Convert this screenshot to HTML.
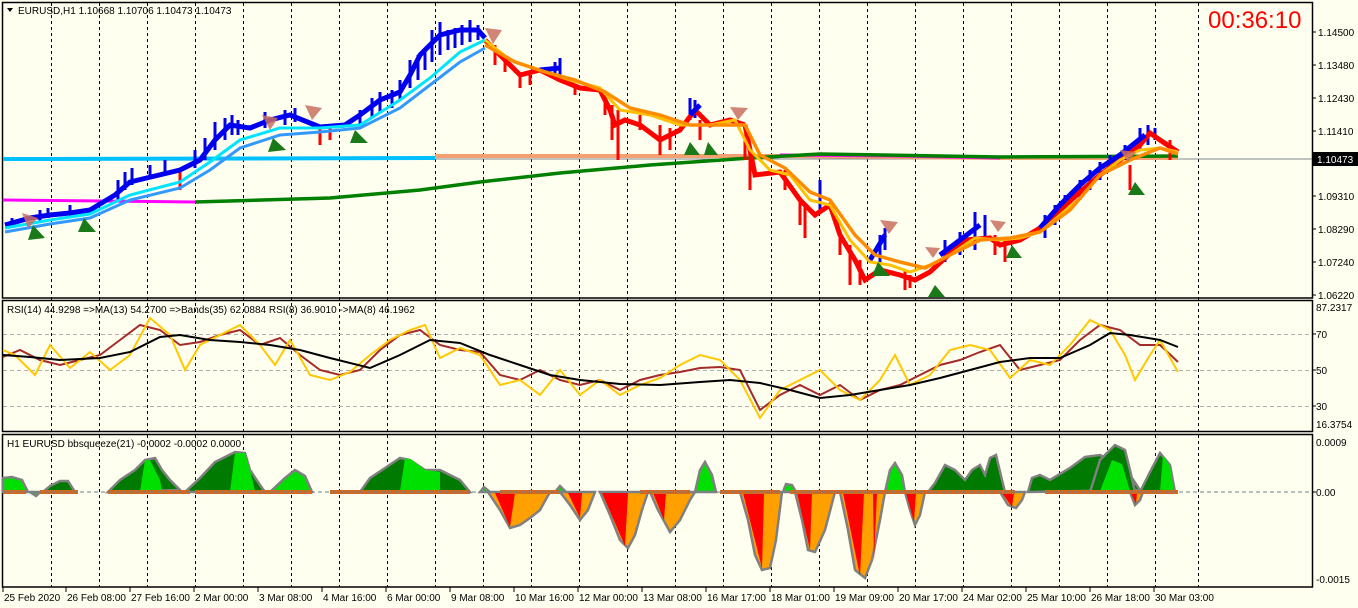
<!DOCTYPE html>
<html><head><meta charset="utf-8"><style>
html,body{margin:0;padding:0;background:#fffff0;width:1358px;height:608px;overflow:hidden}
svg{display:block}
text{font-family:"Liberation Sans","DejaVu Sans",sans-serif;font-size:10px;fill:#000}
</style></head><body>
<svg width="1358" height="608" viewBox="0 0 1358 608" xmlns="http://www.w3.org/2000/svg">
<rect width="1358" height="608" fill="#fffff0"/>
<g stroke="#000" stroke-width="1" stroke-dasharray="3,3">
<path d="M51.5 3V587M99.5 3V587M147.5 3V587M195.5 3V587M243.5 3V587M291.5 3V587M339.5 3V587M387.5 3V587M435.5 3V587M483.5 3V587M531.5 3V587M579.5 3V587M627.5 3V587M675.5 3V587M723.5 3V587M771.5 3V587M819.5 3V587M867.5 3V587M915.5 3V587M963.5 3V587M1011.5 3V587M1059.5 3V587M1107.5 3V587M1155.5 3V587M1198.5 3V587"/>
</g>
<g stroke="#b0b0b0" stroke-dasharray="4,3"><path d="M3 334.5H1312M3 370.5H1312M3 406.5H1312"/></g>
<g fill="none" stroke="#000" stroke-width="1.5">
<rect x="2.5" y="2.5" width="1310" height="295.5"/>
<rect x="2.5" y="300.5" width="1310" height="131"/>
<rect x="2.5" y="434.5" width="1310" height="152.5"/>
</g>
<path d="M3 159H1312" stroke="#808890" stroke-width="1"/>
<path d="M3 159L40 159L435 158" stroke="#00bfff" stroke-width="4" fill="none"/>
<path d="M435 156L740 156L790 156L1000 158L1178 158" stroke="#f4a070" stroke-width="4" fill="none"/>
<path d="M3 200L195 202" stroke="#ff00ff" stroke-width="3" fill="none"/>
<path d="M780 155L900 156L1000 158" stroke="#ff00ff" stroke-width="3" fill="none"/>
<path d="M195 202L330 198L420 190L480 182L560 173L650 165L750 158L820 154L1000 157L1178 156" stroke="#008000" stroke-width="3.5" fill="none"/>
<!-- spiky bars -->
<g stroke="#0000ee" stroke-width="3">
<path d="M12 228V218M40 222V210M48 218V208M70 213V205M118 200V180M125 190V172M132 185V168M150 178V165M165 175V160M195 168V150M205 160V138M215 150V122M225 140V118M232 135V115M238 135V120M265 128V112M285 125V110M295 122V108M360 125V110M372 118V98M380 112V92M392 108V90M400 100V80M410 88V60M418 80V55M425 70V48M432 62V30M440 55V22M448 50V30M455 48V28M462 45V25M470 42V20M478 40V25M555 75V62M560 78V58M690 120V98M695 118V100M820 210V180M880 265V235M885 250V228M945 262V240M960 255V232M975 250V212M985 240V215M1045 238V215M1055 225V205M1065 215V195M1080 200V180M1090 190V170M1100 180V162M1110 170V155M1125 160V145M1140 150V128M1148 145V125M1155 140V128"/>
</g>
<g stroke="#ff0000" stroke-width="3">
<path d="M180 170V190M320 125V145M330 128V140M495 45V65M505 55V72M520 75V88M530 72V85M575 85V95M605 95V115M612 105V140M618 110V160M640 115V130M660 125V155M670 128V150M700 120V140M745 135V160M750 155V190M785 170V190M800 200V225M805 205V238M840 235V255M850 245V285M860 260V285M905 270V290M910 275V288M995 235V255M1005 240V262M1130 165V190M1170 140V160"/>
</g>
<path d="M5 225L30 218L50 215L70 213L90 210L115 195L130 182L155 176L180 170L200 160L215 140L230 125L250 128L270 120L290 115L320 127L345 125L360 115L380 100L400 92L410 75L420 55L440 35L460 30L478 30L485 38" stroke="#0000ee" stroke-width="5" fill="none"/>
<path d="M485 40L500 55L520 75L540 70L560 80L580 88L600 90L610 110L615 125L625 120L640 125L660 140L680 130L695 110L710 125L730 120L745 125" stroke="#ff0000" stroke-width="5" fill="none"/>
<path d="M745 125L755 175L780 172L800 200L815 215L830 205L840 235L855 260L865 280L880 270L900 275L915 280L930 272L945 258L965 240L990 238L1000 245L1020 240L1040 228L1060 210L1080 192L1100 175L1120 160L1140 145L1150 133L1160 140L1178 152" stroke="#ff0000" stroke-width="5" fill="none"/>
<path d="M540 70L560 68M690 115L700 105M870 260L885 235M940 255L980 225M1040 228L1060 205L1080 185L1100 168L1120 155L1145 135" stroke="#0000ee" stroke-width="5" fill="none"/>
<path d="M5 228L50 220L90 214L130 195L180 182L210 162L240 140L280 128L320 128L360 125L400 100L430 78L460 52L485 40" stroke="#00e5ff" stroke-width="3" fill="none"/>
<path d="M5 232L50 224L90 218L130 200L180 188L210 170L240 148L280 135L320 132L360 128L400 108L430 85L460 62L485 48" stroke="#3399ff" stroke-width="3" fill="none"/>
<path d="M485 40L510 60L540 70L570 80L600 88L620 110L650 115L680 125L710 125L735 120L750 150L770 170L790 175L810 200L830 205L850 240L870 262L890 265L910 272L930 265L950 255L975 238L1000 240L1020 238L1040 232L1060 215L1080 198L1100 175L1120 160L1140 150L1160 148L1178 152" stroke="#ffc000" stroke-width="3" fill="none"/>
<path d="M485 45L515 62L545 72L575 80L605 92L630 108L660 115L690 125L720 125L745 125L760 155L785 168L810 192L830 200L855 235L875 255L900 262L925 268L950 255L980 240L1010 238L1040 232L1070 210L1100 175L1130 160L1160 148L1178 154" stroke="#ff8c00" stroke-width="3.5" fill="none"/>
<g fill="#c87060" opacity="0.85">
<path d="M22 213L38 218L28 228Z"/><path d="M262 115L278 118L270 130Z"/><path d="M305 105L322 108L312 120Z"/><path d="M485 28L502 30L493 44Z"/><path d="M730 107L748 108L738 120Z"/><path d="M880 220L898 222L889 234Z"/><path d="M925 247L940 248L933 258Z"/><path d="M990 220L1006 222L998 232Z"/><path d="M1120 150L1136 152L1128 162Z"/>
</g>
<g fill="#1a7a1a">
<path d="M33 225L28 240L45 238Z"/><path d="M84 218L78 232L96 232Z"/><path d="M273 138L268 152L286 150Z"/><path d="M355 130L350 143L368 143Z"/><path d="M690 142L684 155L700 155Z"/><path d="M708 142L704 155L718 155Z"/><path d="M878 262L872 276L890 276Z"/><path d="M935 285L928 297L945 297Z"/><path d="M1012 245L1006 258L1022 258Z"/><path d="M1135 182L1128 195L1145 195Z"/>
</g>
<path d="M3 357L20 350L40 360L60 365L80 360L100 355L120 340L140 325L160 330L180 345L200 342L220 335L240 330L260 345L280 338L300 355L320 370L340 375L360 370L380 350L400 335L420 330L440 345L460 350L480 352L500 375L520 380L540 370L560 380L580 385L600 380L620 390L640 380L660 375L680 372L700 368L720 367L740 370L760 410L780 395L800 385L820 395L840 385L860 400L880 390L900 385L920 375L940 365L960 360L980 352L1000 345L1020 370L1040 365L1060 360L1080 340L1100 325L1120 330L1140 345L1160 345L1178 362" stroke="#a52a2a" stroke-width="2" fill="none"/>
<path d="M3 350L15 355L35 375L50 345L70 368L90 352L110 370L130 355L150 318L170 335L185 370L200 345L220 335L240 325L260 345L275 365L290 340L310 375L330 380L350 372L370 355L390 340L410 330L425 325L440 358L460 348L480 355L500 385L520 380L540 395L560 370L580 395L600 380L620 395L640 385L660 378L680 365L700 355L720 360L740 380L760 418L780 390L800 380L820 370L840 390L860 400L880 380L895 355L910 385L930 375L950 350L970 345L990 350L1010 378L1030 360L1050 365L1070 345L1090 320L1110 330L1125 355L1135 380L1150 355L1160 340L1178 372" stroke="#ffc800" stroke-width="2" fill="none"/>
<path d="M3 355L30 357L60 360L100 358L130 352L160 337L180 335L210 340L240 342L270 345L300 350L330 358L370 368L400 355L430 340L460 343L490 355L520 365L550 375L580 380L620 384L660 385L700 382L730 380L760 383L790 390L820 398L850 395L880 390L910 385L940 378L970 370L1000 362L1030 358L1060 358L1090 345L1110 333L1130 335L1160 340L1178 347" stroke="#000" stroke-width="2" fill="none"/>
<g stroke="#808080" stroke-width="2.5">
<path d="M3 492L3 478L12 477L22 480L28 492Z" fill="#00e000"/>
<path d="M30 492L36 496L40 492Z" fill="#00e000"/>
<path d="M43 492L50 486L60 481L68 481L75 492Z" fill="#007a00"/>
<path d="M108 492L120 480L135 470L145 460L155 458L162 470L170 480L180 490Z" fill="#007a00"/>
<path d="M185 492L200 478L215 462L235 452L245 453L250 470L260 485L265 492Z" fill="#007a00"/>
<path d="M270 492L285 478L295 470L305 476L312 492Z" fill="#00e000"/>
<path d="M360 492L370 478L385 468L400 458L410 460L425 470L440 470L460 480L470 492Z" fill="#007a00"/>
<path d="M480 492L484 487L490 492Z" fill="#00e000"/>
<path d="M555 492L560 486L566 492Z" fill="#00e000"/>
<path d="M695 492L700 470L705 462L712 475L716 492Z" fill="#00e000"/>
<path d="M783 492L786 484L792 485L796 492Z" fill="#00e000"/>
<path d="M885 492L890 470L895 463L902 475L905 492Z" fill="#00e000"/>
<path d="M928 492L935 483L945 465L955 470L965 480L972 470L980 465L985 475L990 458L996 455L1002 480L1005 492Z" fill="#007a00"/>
<path d="M1028 492L1032 478L1040 475L1050 480L1070 468L1085 457L1100 455L1110 460L1120 462L1130 475L1140 490Z" fill="#007a00"/>
<path d="M1090 492L1100 460L1115 445L1125 450L1130 470L1135 492Z" fill="#007a00"/>
<path d="M1140 492L1150 472L1160 453L1170 465L1175 492Z" fill="#007a00"/>
<path d="M488 492L500 510L510 528L520 525L530 518L540 510L550 492Z" fill="#ffa000"/>
<path d="M560 492L570 505L580 520L588 510L595 492Z" fill="#ffa000"/>
<path d="M600 492L610 515L620 540L628 548L635 535L642 510L648 492Z" fill="#ffa000"/>
<path d="M650 492L658 510L670 532L680 520L690 500L695 492Z" fill="#ffa000"/>
<path d="M740 492L748 520L755 555L762 570L770 568L776 540L782 492Z" fill="#ffa000"/>
<path d="M795 492L802 520L808 550L815 552L825 530L835 492Z" fill="#ffa000"/>
<path d="M840 492L848 530L855 570L865 578L872 560L880 520L885 492Z" fill="#ffa000"/>
<path d="M905 492L910 510L915 525L920 515L925 492Z" fill="#ffa000"/>
<path d="M1000 492L1008 505L1016 508L1022 500L1025 492Z" fill="#ffa000"/>
<path d="M1130 492L1135 505L1140 500L1143 492Z" fill="#ffa000"/>
</g>
<g fill="#ff0000">
<path d="M495 493L510 527L515 493Z"/><path d="M568 493L580 518L582 493Z"/><path d="M602 493L625 546L628 493Z"/><path d="M653 493L664 520L666 493Z"/><path d="M743 493L762 568L764 493Z"/><path d="M797 493L810 550L812 493Z"/><path d="M843 493L860 576L864 493Z"/><path d="M873 493L874 560L877 493Z"/><path d="M906 493L914 522L916 493Z"/><path d="M1002 493L1012 507L1014 493Z"/><path d="M1131 493L1136 504L1137 493Z"/>
</g>
<g fill="#00e000"><path d="M140 491L145 460L150 460L160 480L162 491Z"/><path d="M230 491L235 453L245 453L250 470L255 491Z"/><path d="M400 491L405 458L412 460L425 470L440 472L440 491Z"/><path d="M1100 491L1112 460L1122 464L1130 491Z"/><path d="M1160 491L1163 455L1170 466L1174 491Z"/></g>
<g stroke="#d2691e" stroke-width="4"><path d="M3 492H26M40 492H78M108 492H190M195 492H265M265 492H312M330 492H470M500 492H560M640 492H690M720 492H780M790 492H1015M1045 492H1178"/></g>
<path d="M3 492H1312" stroke="#708090" stroke-dasharray="4,3" stroke-width="1"/>
<rect x="1313" y="152" width="45" height="14" fill="#000"/>
<text x="1317" y="163" style="fill:#fff">1.10473</text>
<path d="M7 8L13 8L10 12Z" fill="#000"/>
<text x="18" y="14">EURUSD,H1  1.10668 1.10706 1.10473 1.10473</text>
<text x="7" y="313">RSI(14) 44.9298  =&gt;MA(13) 54.2700  =&gt;Bands(35) 62.0884  RSI(8) 36.9010  -&gt;MA(8) 46.1962</text>
<text x="7" y="447">H1 EURUSD bbsqueeze(21) -0.0002 -0.0002 0.0000</text>
<text x="1208" y="28" style="font-size:24px;fill:#ff0000">00:36:10</text>
<g stroke="#000"><path d="M1313 32H1316M1313 65H1316M1313 98H1316M1313 131H1316M1313 196H1316M1313 229H1316M1313 262H1316M1313 295H1316M1313 334H1316M1313 370H1316M1313 406H1316M1313 492H1316"/></g>
<text x="1318" y="36">1.14500</text><text x="1318" y="69">1.13480</text><text x="1318" y="102">1.12430</text><text x="1318" y="135">1.11410</text><text x="1318" y="200">1.09310</text><text x="1318" y="233">1.08290</text><text x="1318" y="266">1.07240</text><text x="1318" y="299">1.06220</text>
<text x="1316" y="311">87.2317</text><text x="1316" y="338">70</text><text x="1316" y="374">50</text><text x="1316" y="410">30</text><text x="1316" y="428">16.3754</text>
<text x="1316" y="446">0.0009</text><text x="1316" y="496">0.00</text><text x="1316" y="583">-0.0015</text>
<g stroke="#000"><path d="M3 587V592M66 587V592M130 587V592M194 587V592M258 587V592M322 587V592M386 587V592M450 587V592M514 587V592M578 587V592M642 587V592M706 587V592M770 587V592M834 587V592M898 587V592M962 587V592M1026 587V592M1090 587V592M1154 587V592"/></g>
<text x="4" y="601">25 Feb 2020</text><text x="67" y="601">26 Feb 08:00</text><text x="131" y="601">27 Feb 16:00</text><text x="195" y="601">2 Mar 00:00</text><text x="259" y="601">3 Mar 08:00</text><text x="323" y="601">4 Mar 16:00</text><text x="387" y="601">6 Mar 00:00</text><text x="451" y="601">9 Mar 08:00</text><text x="515" y="601">10 Mar 16:00</text><text x="579" y="601">12 Mar 00:00</text><text x="643" y="601">13 Mar 08:00</text><text x="707" y="601">16 Mar 17:00</text><text x="771" y="601">18 Mar 01:00</text><text x="835" y="601">19 Mar 09:00</text><text x="899" y="601">20 Mar 17:00</text><text x="963" y="601">24 Mar 02:00</text><text x="1027" y="601">25 Mar 10:00</text><text x="1091" y="601">26 Mar 18:00</text><text x="1155" y="601">30 Mar 03:00</text>
</svg>
</body></html>
